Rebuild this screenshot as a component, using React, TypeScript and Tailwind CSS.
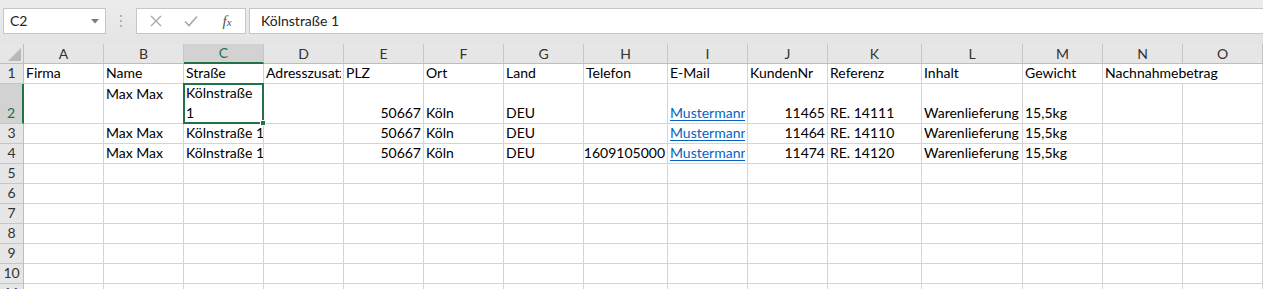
import React from "react";

type Cell = {
  t?: string;
  right?: boolean;
  link?: boolean;
  top?: boolean;
  wrap?: boolean;
  overflow?: boolean;
  clip?: boolean;
};

const COLS = ["A", "B", "C", "D", "E", "F", "G", "H", "I", "J", "K", "L", "M", "N", "O"];

const link = "Mustermann@mail.de";

const rows: { h: number; cells: Record<string, Cell> }[] = [
  {
    h: 20,
    cells: {
      A: { t: "Firma" },
      B: { t: "Name" },
      C: { t: "Straße" },
      D: { t: "Adresszusatz", clip: true },
      E: { t: "PLZ" },
      F: { t: "Ort" },
      G: { t: "Land" },
      H: { t: "Telefon" },
      I: { t: "E-Mail" },
      J: { t: "KundenNr" },
      K: { t: "Referenz" },
      L: { t: "Inhalt" },
      M: { t: "Gewicht" },
      N: { t: "Nachnahmebetrag", overflow: true },
    },
  },
  {
    h: 40,
    cells: {
      B: { t: "Max Max", top: true },
      C: { t: "Kölnstraße 1", wrap: true },
      E: { t: "50667", right: true },
      F: { t: "Köln" },
      G: { t: "DEU" },
      I: { t: link, link: true },
      J: { t: "11465", right: true },
      K: { t: "RE. 14111" },
      L: { t: "Warenlieferung" },
      M: { t: "15,5kg" },
    },
  },
  {
    h: 20,
    cells: {
      B: { t: "Max Max" },
      C: { t: "Kölnstraße 1" },
      E: { t: "50667", right: true },
      F: { t: "Köln" },
      G: { t: "DEU" },
      I: { t: link, link: true },
      J: { t: "11464", right: true },
      K: { t: "RE. 14110" },
      L: { t: "Warenlieferung" },
      M: { t: "15,5kg" },
    },
  },
  {
    h: 20,
    cells: {
      B: { t: "Max Max" },
      C: { t: "Kölnstraße 1" },
      E: { t: "50667", right: true },
      F: { t: "Köln" },
      G: { t: "DEU" },
      H: { t: "1609105000", right: true },
      I: { t: link, link: true },
      J: { t: "11474", right: true },
      K: { t: "RE. 14120" },
      L: { t: "Warenlieferung" },
      M: { t: "15,5kg" },
    },
  },
  { h: 20, cells: {} },
  { h: 20, cells: {} },
  { h: 20, cells: {} },
  { h: 20, cells: {} },
  { h: 20, cells: {} },
  { h: 20, cells: {} },
  { h: 20, cells: {} },
];

function FormulaBar() {
  return (
    <div className="h-[44px] bg-[#e6e6e6] bg-gradient-to-b from-[#ececec] to-[#e4e4e4] flex pt-[8px] pl-[3px]">
      {/* Name box */}
      <div className="w-[103px] h-[26px] bg-white border border-[#c6c6c6] flex items-center pl-[6px] pr-[6px]">
        <span className="flex-1 text-[14px] text-[#222] leading-none">C2</span>
        <svg width="8" height="5" viewBox="0 0 8 5">
          <polygon points="0,0 8,0 4,4.5" fill="#7b7b7b" />
        </svg>
      </div>
      {/* dots */}
      <div className="w-[30px] h-[26px] flex flex-col items-center justify-center gap-[3px]">
        <div className="w-[2px] h-[2px] bg-[#b3b3b3]" />
        <div className="w-[2px] h-[2px] bg-[#b3b3b3]" />
        <div className="w-[2px] h-[2px] bg-[#b3b3b3]" />
      </div>
      {/* buttons box */}
      <div className="w-[110px] h-[26px] bg-white border border-[#c6c6c6] flex items-center">
        <div className="w-[36px] flex justify-center pl-[2px]">
          <svg width="12" height="12" viewBox="0 0 12 12">
            <path d="M1 1 L11 11 M11 1 L1 11" stroke="#a8a8a8" strokeWidth="1.3" fill="none" />
          </svg>
        </div>
        <div className="w-[36px] flex justify-center">
          <svg width="14" height="12" viewBox="0 0 14 12">
            <path d="M1 6.5 L5 10.5 L13 1.5" stroke="#a8a8a8" strokeWidth="1.6" fill="none" />
          </svg>
        </div>
        <div className="w-[36px] flex justify-center">
          <span className="font-['Liberation_Serif',serif] italic text-[15px] text-[#555] leading-none">
            f<span className="text-[11px]">x</span>
          </span>
        </div>
      </div>
      {/* formula input */}
      <div className="flex-1 ml-[3px] h-[26px] bg-white border border-[#c6c6c6] border-r-0 flex items-center pl-[11px]">
        <span className="text-[14px] text-[#222] leading-none">Kölnstraße 1</span>
      </div>
    </div>
  );
}

function HeaderRow() {
  return (
    <>
      <div className="h-[20px] bg-[#e6e6e6] border-r border-b border-[#bdbdbd] relative">
        <svg className="absolute left-[8px] top-[4px]" width="13" height="13" viewBox="0 0 13 13">
          <polygon points="13,0 13,13 0,13" fill="#b8b8b8" />
        </svg>
      </div>
      {COLS.map((c) =>
        c === "C" ? (
          <div
            key={c}
            className="h-[20px] bg-[#d2d2d2] border-r border-r-[#c6c6c6] border-b-2 border-b-[#217346] flex items-center justify-center text-[#217346] text-[14px] leading-none"
          >
            {c}
          </div>
        ) : (
          <div
            key={c}
            className="h-[20px] bg-[#e6e6e6] border-r border-r-[#c6c6c6] border-b border-b-[#bdbdbd] flex items-center justify-center text-[#333] text-[14px] leading-none"
          >
            {c}
          </div>
        )
      )}
    </>
  );
}

function DataCell({ cell, col, row, h }: { cell?: Cell; col: string; row: number; h: number }) {
  const selected = col === "C" && row === 2;
  const noRight = cell?.overflow;
  const base =
    "relative border-b border-[#d4d4d4] px-[2px] text-[14px] leading-[20px] text-black whitespace-nowrap flex";
  const cls = [
    base,
    noRight ? "overflow-visible" : "border-r overflow-hidden",
    cell?.top ? "items-start" : "items-end",
    cell?.right ? "justify-end" : "justify-start",
    selected ? "overflow-visible" : "",
  ].join(" ");
  return (
    <div className={cls} style={{ height: h }}>
      {cell?.wrap ? (
        <div className="flex flex-col">
          <span>Kölnstraße</span>
          <span>1</span>
        </div>
      ) : cell?.link ? (
        <span className="min-w-0 overflow-hidden text-[#0563c1] underline underline-offset-[2px]">{cell.t}</span>
      ) : cell?.t ? (
        <span
          className={
            cell.overflow ? "relative z-[1]" : cell.clip ? "min-w-0 overflow-hidden" : "shrink-0"
          }
        >
          {cell.t}
        </span>
      ) : null}
      {selected && (
        <div className="absolute left-[-1px] top-[-1px] w-[81px] h-[41px] border-2 border-[#217346] z-10 pointer-events-none">
          <div className="absolute right-[-4px] bottom-[-4px] w-[6px] h-[6px] bg-[#217346] border border-white" />
        </div>
      )}
    </div>
  );
}

export default function App() {
  return (
    <div className="w-[1263px] h-[289px] overflow-hidden bg-white font-['Lato','Liberation_Sans',sans-serif]">
      <FormulaBar />
      <div className="grid grid-cols-[24px_80px_80px_80px_80px_80px_80px_80px_84px_80px_80px_94px_101px_80px_80px_80px]">
        <HeaderRow />
        {rows.map((r, i) => {
          const n = i + 1;
          const sel = n === 2;
          return (
            <React.Fragment key={n}>
              <div
                className={
                  sel
                    ? "bg-[#d2d2d2] border-r-2 border-r-[#217346] border-b border-b-[#c6c6c6] flex items-end justify-center text-[#217346] text-[14px] leading-[20px]"
                    : "bg-[#e6e6e6] border-r border-r-[#bdbdbd] border-b border-b-[#c6c6c6] flex items-end justify-center text-[#333] text-[14px] leading-[20px]"
                }
                style={{ height: r.h }}
              >
                {n}
              </div>
              {COLS.map((c) => (
                <DataCell key={c} cell={r.cells[c]} col={c} row={n} h={r.h} />
              ))}
            </React.Fragment>
          );
        })}
      </div>
    </div>
  );
}
